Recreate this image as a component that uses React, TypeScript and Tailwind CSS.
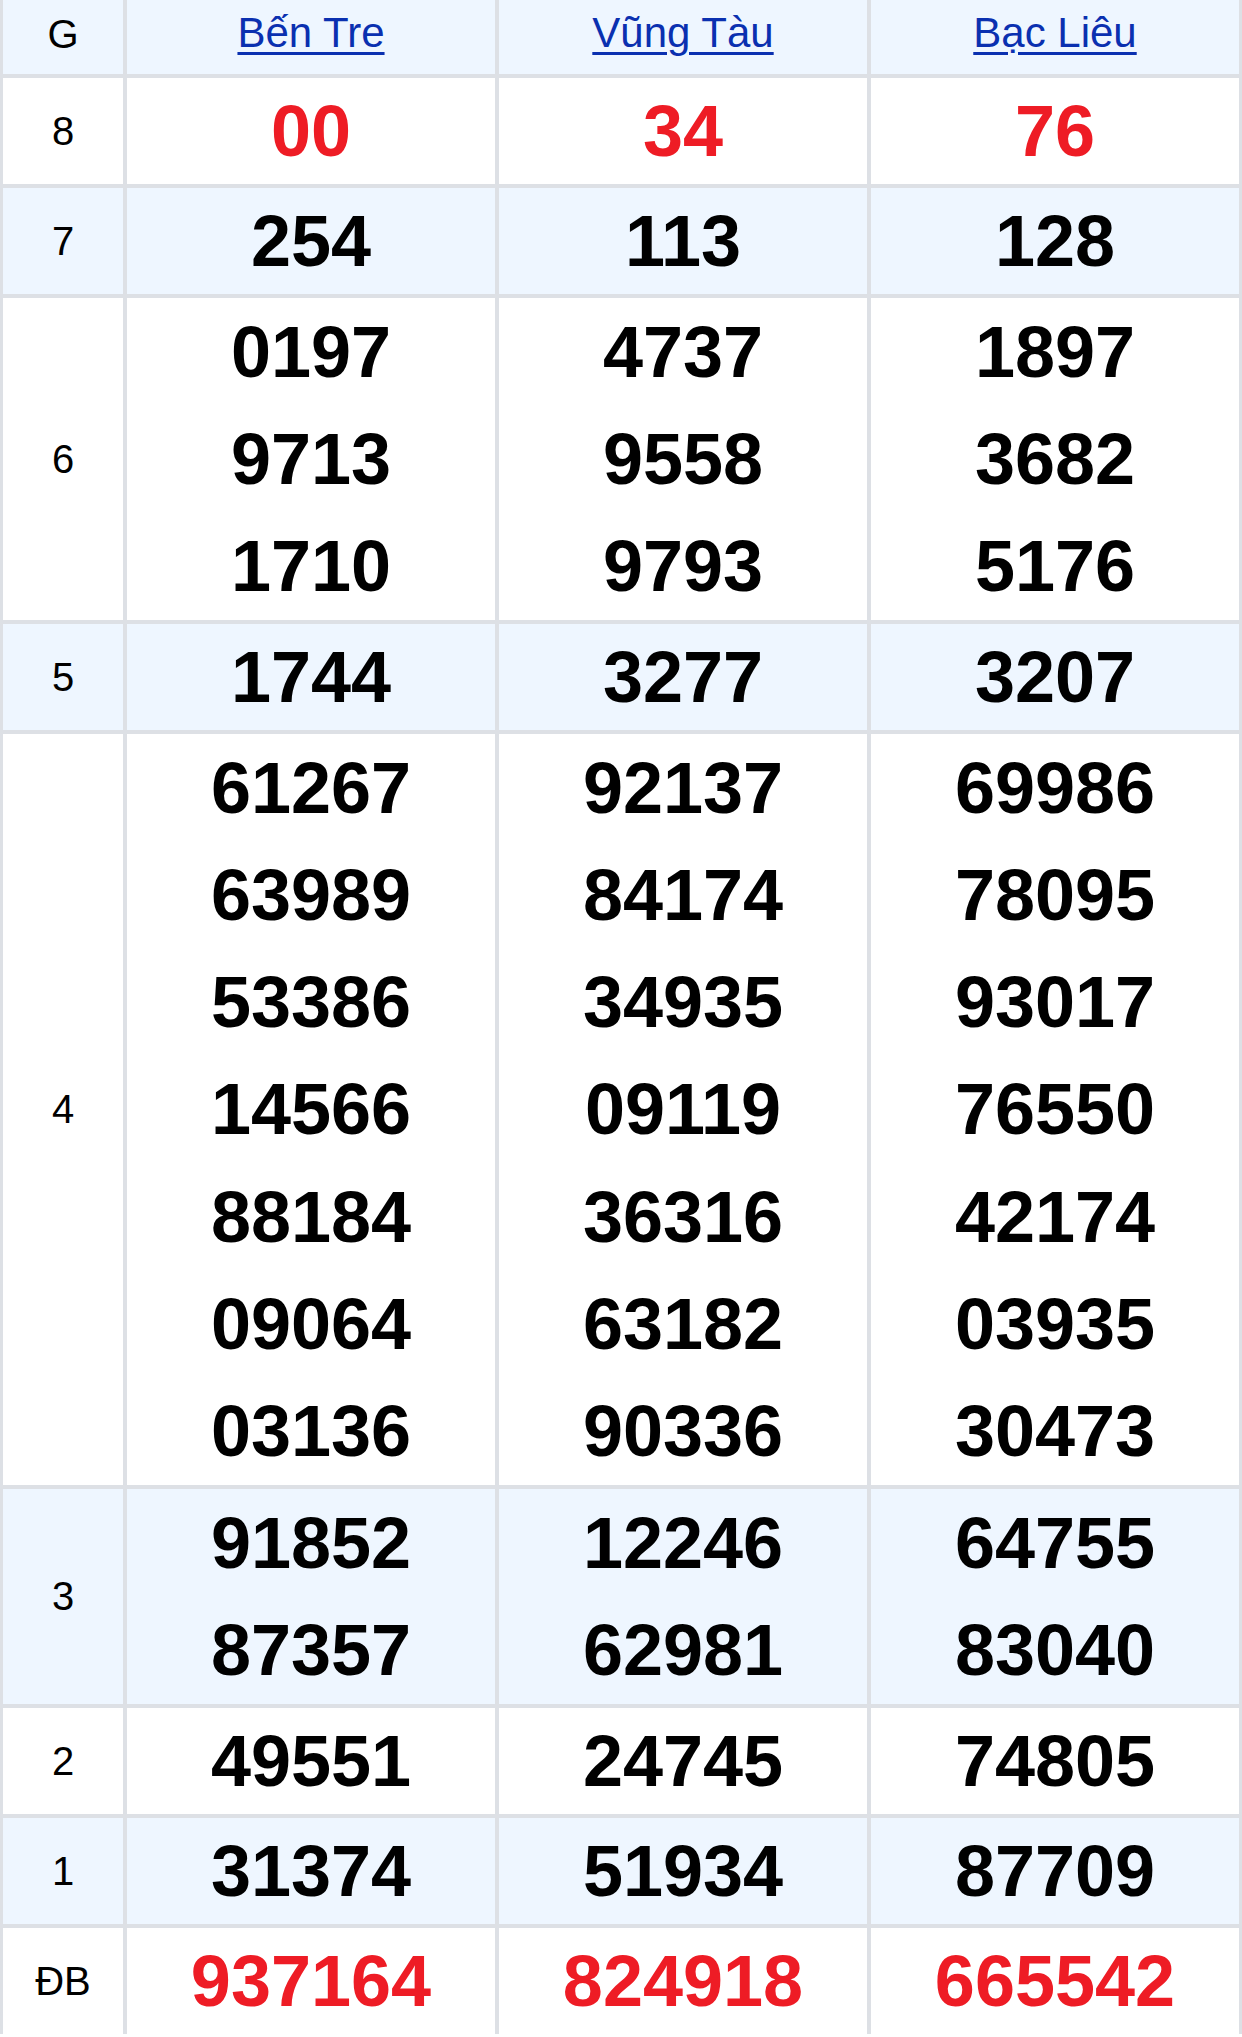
import React from 'react';

const PROVINCES = ['Bến Tre', 'Vũng Tàu', 'Bạc Liêu'];

// each prize row: label + values per province (one array entry per line)
const ROWS: { label: string; values: string[][]; red?: boolean }[] = [
  { label: '8', values: [['00'], ['34'], ['76']], red: true },
  { label: '7', values: [['254'], ['113'], ['128']] },
  {
    label: '6',
    values: [
      ['0197', '9713', '1710'],
      ['4737', '9558', '9793'],
      ['1897', '3682', '5176'],
    ],
  },
  { label: '5', values: [['1744'], ['3277'], ['3207']] },
  {
    label: '4',
    values: [
      ['61267', '63989', '53386', '14566', '88184', '09064', '03136'],
      ['92137', '84174', '34935', '09119', '36316', '63182', '90336'],
      ['69986', '78095', '93017', '76550', '42174', '03935', '30473'],
    ],
  },
  {
    label: '3',
    values: [
      ['91852', '87357'],
      ['12246', '62981'],
      ['64755', '83040'],
    ],
  },
  { label: '2', values: [['49551'], ['24745'], ['74805']] },
  { label: '1', values: [['31374'], ['51934'], ['87709']] },
  { label: 'ĐB', values: [['937164'], ['824918'], ['665542']], red: true },
];

export default function App() {
  return (
    <div className="w-[1242px] bg-white font-['Liberation_Sans',Arial,sans-serif]">
      <div className="grid grid-cols-[120px_368px_368px_368px] gap-x-[4px] gap-y-[4px] bg-[#dde0e5] px-[3px]">
        {/* Header */}
        <div className="h-[74px] bg-[#eef6ff] flex items-center justify-center pb-[6px] text-[40px] text-black">
          G
        </div>
        {PROVINCES.map((p) => (
          <div key={p} className="h-[74px] bg-[#eef6ff] flex items-center justify-center pb-[8px]">
            <a href="#" className="text-[42px] text-[#0a30b0] underline decoration-[3px] underline-offset-[5px] leading-none">
              {p}
            </a>
          </div>
        ))}

        {ROWS.map((row, i) => {
          const bg = i % 2 === 0 ? 'bg-white' : 'bg-[#eef6ff]';
          const single = row.values[0].length === 1;
          return (
            <React.Fragment key={row.label}>
              <div className={`${bg} flex items-center justify-center text-[40px] text-black`}>
                {row.label}
              </div>
              {row.values.map((lines, j) => (
                <div key={j} className={`${bg} flex flex-col items-center justify-center`}>
                  {lines.map((n, k) => (
                    <div
                      key={k}
                      className={`${single ? 'h-[106px]' : 'h-[107.3px]'} flex items-center font-bold text-[72px] ${
                        row.red ? 'text-[#ee1c25]' : 'text-black'
                      }`}
                    >
                      {n}
                    </div>
                  ))}
                </div>
              ))}
            </React.Fragment>
          );
        })}
      </div>
    </div>
  );
}
